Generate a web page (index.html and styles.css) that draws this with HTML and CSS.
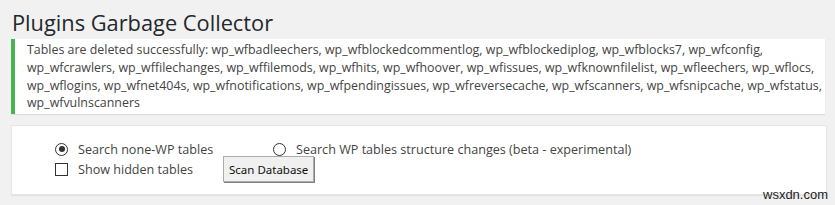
FILE: index.html
```html
<!DOCTYPE html>
<html>
<head>
<meta charset="utf-8">
<link rel="stylesheet" href="styles.css">
</head>
<body>
<div class="wrap">
  <h1 class="title">Plugins Garbage Collector</h1>
  <div class="notice">
    <p>Tables are deleted successfully: wp_wfbadleechers, wp_wfblockedcommentlog, wp_wfblockediplog, wp_wfblocks7, wp_wfconfig,<br>wp_wfcrawlers, wp_wffilechanges, wp_wffilemods, wp_wfhits, wp_wfhoover, wp_wfissues, wp_wfknownfilelist, wp_wfleechers, wp_wflocs,<br>wp_wflogins, wp_wfnet404s, wp_wfnotifications, wp_wfpendingissues, wp_wfreversecache, wp_wfscanners, wp_wfsnipcache, wp_wfstatus,<br>wp_wfvulnscanners</p>
  </div>
  <div class="panel">
    <div class="row">
      <label class="opt opt-first"><span class="radio checked"></span>Search none-WP tables</label>
      <label class="opt"><span class="radio"></span>Search WP tables structure changes (beta - experimental)</label>
    </div>
    <div class="row row2">
      <label class="opt opt-first2"><span class="check"></span>Show hidden tables</label>
      <button class="scan">Scan Database</button>
    </div>
  </div>
</div>
<div class="watermark">wsxdn.com</div>
</body>
</html>
```
FILE: styles.css
```css
html, body {
  margin: 0;
  padding: 0;
  background: #f1f1f1;
  width: 835px;
  height: 205px;
  overflow: hidden;
  font-family: "Open Sans", "Noto Sans", sans-serif;
  color: #444;
}
.wrap {
  padding: 0 8px 0 11px;
}
.title {
  margin: 0;
  padding: 8px 0 0 1px;
  font-size: 21.8px;
  font-weight: 400;
  line-height: 29px;
  color: #23282d;
}
.notice {
  margin-top: 2px;
  width: 810px;
  background: #fff;
  border-left: 4px solid #46b450;
  box-shadow: 0 1px 1px rgba(0,0,0,0.08);
}
.notice p {
  margin: 0;
  padding: 2px 0 2px 12px;
  font-size: 12.42px;
  line-height: 17.8px;
  color: #444;
}
.panel {
  margin-top: 11px;
  width: 816px;
  height: 70px;
  background: #fff;
  box-shadow: 0 1px 1px rgba(0,0,0,0.06);
  border: 1px solid #e5e5e5;
  box-sizing: border-box;
  padding: 13px 0 0 43px;
  color: #444;
}
.row {
  display: flex;
  align-items: center;
  height: 20px;
}
.opt {
  display: flex;
  align-items: center;
  font-size: 12.6px;
}
.opt-first {
  width: 218px;
}
.opt-first2 {
  width: 168px;
}
.radio {
  width: 13px;
  height: 13px;
  border: 1px solid #333;
  border-radius: 50%;
  box-sizing: border-box;
  margin-right: 10px;
  position: relative;
  flex: none;
}
.radio.checked::after {
  content: "";
  position: absolute;
  left: 2.5px;
  top: 2.5px;
  width: 6px;
  height: 6px;
  border-radius: 50%;
  background: #333;
}
.check {
  width: 13px;
  height: 13px;
  border: 1px solid #333;
  box-sizing: border-box;
  margin-right: 10px;
  flex: none;
}
.scan {
  font-family: "Noto Sans", "Open Sans", sans-serif;
  font-size: 11.5px;
  color: #111;
  background: #f0f0f0;
  border: 1px solid #adadad;
  box-shadow: 1px 1px 0 #808080;
  padding: 0 5px;
  height: 26px;
}
.watermark {
  position: absolute;
  left: 763px;
  top: 187px;
  font-family: "Liberation Sans", Arial, sans-serif;
  font-size: 13px;
  color: #222;
}
```
